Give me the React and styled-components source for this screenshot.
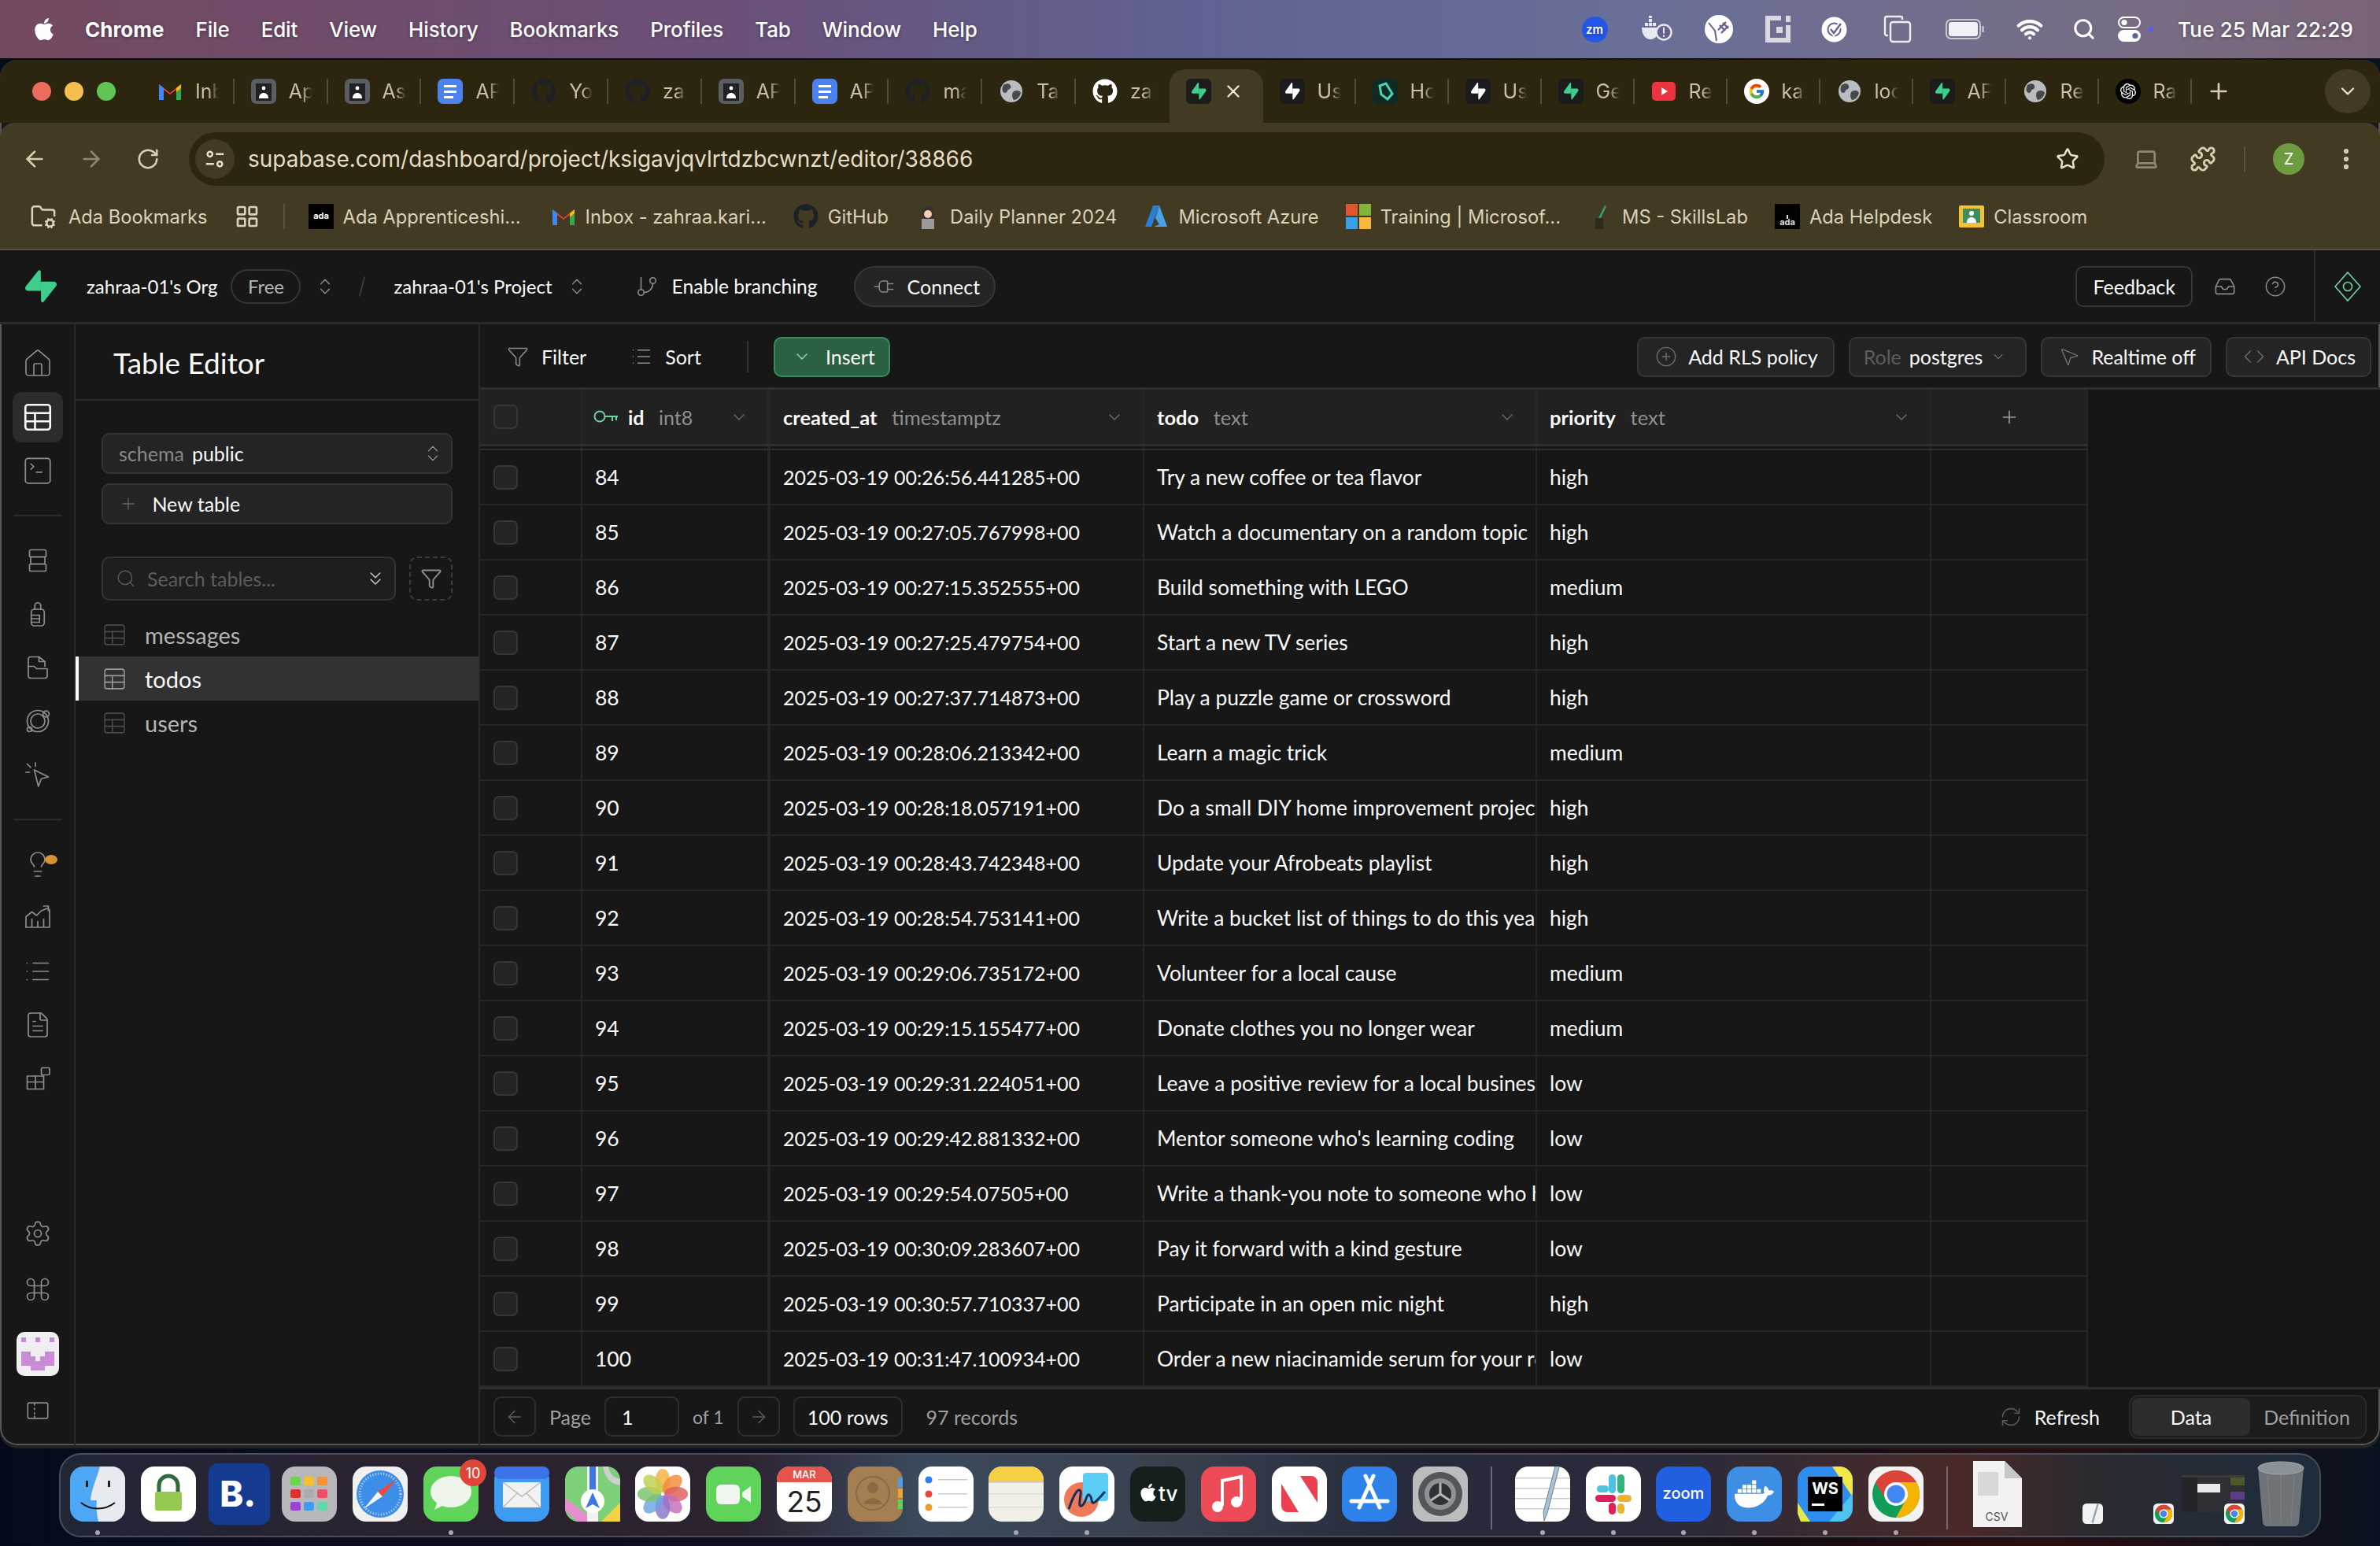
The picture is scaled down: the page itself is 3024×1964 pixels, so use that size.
import { createGlobalStyle, styled } from "styled-components";
import {
  ArrowLeft, ArrowRight, RotateCw, Star, Laptop, Puzzle, EllipsisVertical, Plus, ChevronDown, ChevronsUpDown,
  X, FolderCog, LayoutGrid, GitBranch, Plug, Inbox, CircleHelp, Filter as FilterIcon, List, ChevronsDown, Search,
  CirclePlus, MousePointer2, Code, RefreshCw, Lightbulb, FileText, Settings, Command, SquareTerminal,
  House, Wifi,
} from "lucide-react";
import { FaApple, FaGithub, FaDocker } from "react-icons/fa";
import { FcGoogle } from "react-icons/fc";
import { SiOpenai } from "react-icons/si";

const APP_FONT = `"Lato", "Liberation Sans", sans-serif`;
const SYS_FONT = `"Inter", "Liberation Sans", sans-serif`;

const rows = [
  [84, "2025-03-19 00:26:56.441285+00", "Try a new coffee or tea flavor", "high"],
  [85, "2025-03-19 00:27:05.767998+00", "Watch a documentary on a random topic", "high"],
  [86, "2025-03-19 00:27:15.352555+00", "Build something with LEGO", "medium"],
  [87, "2025-03-19 00:27:25.479754+00", "Start a new TV series", "high"],
  [88, "2025-03-19 00:27:37.714873+00", "Play a puzzle game or crossword", "high"],
  [89, "2025-03-19 00:28:06.213342+00", "Learn a magic trick", "medium"],
  [90, "2025-03-19 00:28:18.057191+00", "Do a small DIY home improvement project", "high"],
  [91, "2025-03-19 00:28:43.742348+00", "Update your Afrobeats playlist", "high"],
  [92, "2025-03-19 00:28:54.753141+00", "Write a bucket list of things to do this year", "high"],
  [93, "2025-03-19 00:29:06.735172+00", "Volunteer for a local cause", "medium"],
  [94, "2025-03-19 00:29:15.155477+00", "Donate clothes you no longer wear", "medium"],
  [95, "2025-03-19 00:29:31.224051+00", "Leave a positive review for a local business", "low"],
  [96, "2025-03-19 00:29:42.881332+00", "Mentor someone who's learning coding", "low"],
  [97, "2025-03-19 00:29:54.07505+00", "Write a thank-you note to someone who helped", "low"],
  [98, "2025-03-19 00:30:09.283607+00", "Pay it forward with a kind gesture", "low"],
  [99, "2025-03-19 00:30:57.710337+00", "Participate in an open mic night", "high"],
  [100, "2025-03-19 00:31:47.100934+00", "Order a new niacinamide serum for your routine", "low"],
];

const COLUMNS = "130px 239px 475px 499px 501px 199px";

/* ---------- small drawings ---------- */

const SupaMark = ({ size = 32, color = "#3ecf8e" }) => (
  <svg width={size} height={size * 1.04} viewBox="0 0 109 113" fill="none">
    <path d="M63.7 110.3c-2.9 3.6-8.7 1.6-8.7-3L54 40.1h45.2c8.2 0 12.8 9.5 7.7 15.9l-43.2 54.3z" fill={color} />
    <path d="M45.3 2.1c2.9-3.6 8.7-1.6 8.7 3l.4 67.2H9.8c-8.2 0-12.8-9.5-7.7-15.9L45.3 2.1z" fill={color} />
  </svg>
);

const Fav = ({ children, bg = "none" }) => (
  <svg width="32" height="32" viewBox="0 0 32 32">
    <rect width="32" height="32" rx="7" fill={bg} />
    {children}
  </svg>
);

const GmailFav = () => (
  <Fav>
    <path d="M2 27V7l14 11L30 7v20h-6V14l-8 6-8-6v13z" fill="#ea4335" />
    <path d="M2 27V7l6 5v15z" fill="#4285f4" />
    <path d="M30 27V7l-6 5v15z" fill="#34a853" />
    <path d="M24 12l6-5v5l-6 5z" fill="#fbbc04" />
  </Fav>
);
const ContactFav = () => (
  <Fav bg="#5a5d62">
    <rect x="6" y="6" width="20" height="22" fill="#1f2124" />
    <circle cx="16" cy="12" r="2.4" fill="#fff" />
    <path d="M10 25c0-5 3-7 6-7s6 2 6 7z" fill="#fff" />
  </Fav>
);
const DocsFav = () => (
  <Fav bg="#4c82ee">
    <rect x="8" y="8" width="16" height="3" fill="#fff" />
    <rect x="8" y="15" width="16" height="3" fill="#fff" />
    <rect x="8" y="22" width="12" height="3" fill="#fff" />
  </Fav>
);
const SupaFav = ({ color = "#3ecf8e" }) => (
  <svg width="32" height="32" viewBox="0 0 32 32">
    <rect width="32" height="32" rx="6" fill="#1c1c1c" />
    <g transform="translate(7 5) scale(.17 .19)">
      <path d="M63.7 110.3c-2.9 3.6-8.7 1.6-8.7-3L54 40.1h45.2c8.2 0 12.8 9.5 7.7 15.9l-43.2 54.3z" fill={color} />
      <path d="M45.3 2.1c2.9-3.6 8.7-1.6 8.7 3l.4 67.2H9.8c-8.2 0-12.8-9.5-7.7-15.9L45.3 2.1z" fill={color} />
    </g>
  </svg>
);
const GlobeFav = () => (
  <Fav>
    <circle cx="16" cy="16" r="14" fill="#b9bcc0" />
    <path d="M6 8c5-3 8-2 9 1s-1 4-3 5-1 4-4 4-5-5-2-10zM19 16c4-2 8-1 9 2-1 5-5 9-9 9-2-3-3-8 0-11z" fill="#45484d" />
  </Fav>
);
const YtFav = () => (
  <Fav>
    <rect x="1" y="4" width="30" height="24" rx="5" fill="#ee3340" />
    <path d="M13 11l8 5-8 5z" fill="#fff" />
  </Fav>
);
const HcFav = () => (
  <Fav bg="#0d2a26">
    <path d="M9 9l8-3 8 13-6 7-8-6z" fill="none" stroke="#4ad6b0" strokeWidth="3" />
  </Fav>
);
const GoogleFav = () => (
  <svg width="32" height="32" viewBox="0 0 32 32">
    <circle cx="16" cy="16" r="16" fill="#fff" />
    <FcGoogle x="5" y="5" size={22} />
  </svg>
);
const GptFav = () => (
  <svg width="32" height="32" viewBox="0 0 32 32">
    <circle cx="16" cy="16" r="16" fill="#000" />
    <SiOpenai x="6" y="6" size={20} color="#fff" />
  </svg>
);

const favicons = {
  gmail: <GmailFav />,
  contact: <ContactFav />,
  docs: <DocsFav />,
  ghDark: <FaGithub size={32} color="#1d2126" />,
  ghWhite: <FaGithub size={32} color="#fff" />,
  globe: <GlobeFav />,
  supaG: <SupaFav />,
  supaW: <SupaFav color="#fff" />,
  hc: <HcFav />,
  yt: <YtFav />,
  google: <GoogleFav />,
  gpt: <GptFav />,
};

const tabs = [
  ["gmail", "Inbox"], ["contact", "Apprentice"], ["contact", "Assign"], ["docs", "APIs"], ["ghDark", "Your"], ["ghDark", "zahraa"],
  ["contact", "APIs"], ["docs", "APIs"], ["ghDark", "main"], ["globe", "Tasks"], ["ghWhite", "zahraa"], ["supaG", "todos", true],
  ["supaW", "Users"], ["hc", "Home"], ["supaW", "Users"], ["supaG", "Getting"], ["yt", "React"], ["google", "kahoot"],
  ["globe", "local"], ["supaG", "APIs"], ["globe", "React"], ["gpt", "Rate"],
];

const AdaFav = () => (
  <svg width="32" height="32" viewBox="0 0 32 32">
    <rect width="32" height="32" fill="#000" />
    <text x="16" y="19" fontSize="11" fontWeight="700" fill="#fff" textAnchor="middle" fontFamily="Inter">ada</text>
  </svg>
);
const PersonFav = () => (
  <Fav>
    <path d="M9 12c0-6 3-10 7-10s7 4 7 10v6H9z" fill="#3a3230" />
    <circle cx="16" cy="13" r="5" fill="#f2cfb4" />
    <rect x="8" y="19" width="16" height="13" fill="#9a9a9a" />
  </Fav>
);
const AzureFav = () => (
  <Fav>
    <path d="M12 2h8L10 29H2z" fill="#2a7fd5" />
    <path d="M20 2l10 27H13l7-3-5-8 5-16z" fill="#4aa3e8" />
  </Fav>
);
const MsFav = () => (
  <Fav>
    <rect x="0" y="0" width="15" height="15" fill="#e3542c" />
    <rect x="17" y="0" width="15" height="15" fill="#7fb539" />
    <rect x="0" y="17" width="15" height="15" fill="#39a0e5" />
    <rect x="17" y="17" width="15" height="15" fill="#f6b93b" />
  </Fav>
);
const SkillsFav = () => (
  <Fav>
    <path d="M14 18l8-16 2 1-8 17z" fill="#3aa074" />
    <rect x="10" y="18" width="10" height="14" fill="#2e2c20" />
  </Fav>
);
const HelpFav = () => (
  <svg width="32" height="32" viewBox="0 0 32 32">
    <rect width="32" height="32" fill="#000" />
    <text x="16" y="27" fontSize="11" fontWeight="700" fill="#ddd" textAnchor="middle" fontFamily="Inter">ada</text>
    <rect x="15" y="14" width="2" height="5" fill="#ddd" />
  </svg>
);
const ClassFav = () => (
  <Fav>
    <rect x="0" y="2" width="32" height="28" rx="2" fill="#f0c13c" />
    <rect x="5" y="6" width="22" height="18" fill="#3e8f5c" />
    <circle cx="16" cy="12" r="3" fill="#fff" />
    <path d="M10 24c0-5 3-7 6-7s6 2 6 7z" fill="#fff" />
  </Fav>
);

const bookmarks = [
  [<AdaFav />, "Ada Apprenticeshi..."],
  [<GmailFav />, "Inbox - zahraa.kari..."],
  [<FaGithub size={32} color="#1d2126" />, "GitHub"],
  [<PersonFav />, "Daily Planner 2024"],
  [<AzureFav />, "Microsoft Azure"],
  [<MsFav />, "Training | Microsof..."],
  [<SkillsFav />, "MS - SkillsLab"],
  [<HelpFav />, "Ada Helpdesk"],
  [<ClassFav />, "Classroom"],
];

const Stroke = ({ children, size = 36, width = 1.15 }) => (
  <svg width={size} height={size} viewBox="0 0 24 24" fill="none" stroke="currentColor" strokeWidth={width} strokeLinecap="round" strokeLinejoin="round">
    {children}
  </svg>
);
const TableIcon = ({ size = 36, width = 1.2 }) => (
  <Stroke size={size} width={width}>
    <rect x="3" y="3" width="18" height="18" rx="2" />
    <path d="M3 9h18M3 15h18M10 9v12" />
  </Stroke>
);
const DbIcon = () => (
  <Stroke>
    <rect x="5" y="3" width="14" height="6" rx="1.2" />
    <rect x="6" y="9" width="12" height="6" />
    <rect x="5" y="15" width="14" height="6" rx="1.2" />
  </Stroke>
);
const AuthIcon = () => (
  <Stroke>
    <path d="M9.5 8V5a2.5 2.5 0 0 1 5 0v3" />
    <rect x="6.5" y="8" width="11" height="14" rx="2.5" />
    <path d="M6.5 13h7v6h-7M6.5 16h7" />
  </Stroke>
);
const StorageIcon = () => (
  <Stroke>
    <path d="M4 11V5a2 2 0 0 1 2-2h7l5 4v4" />
    <path d="M13 3v4h5" />
    <path d="M4 11h5l2 2h9v6a2 2 0 0 1-2 2H6a2 2 0 0 1-2-2z" />
  </Stroke>
);
const OrbitIcon = () => (
  <Stroke>
    <circle cx="12" cy="12" r="9" />
    <circle cx="12" cy="12" r="6" />
    <circle cx="19" cy="6" r="2.6" />
    <circle cx="5" cy="19" r="2" />
  </Stroke>
);
const PointerIcon = () => (
  <Stroke>
    <path d="M9 8l12 6-6 1.5-2.5 6.5z" />
    <path d="M6 6L3 3M5 10H2M10 5V2" />
  </Stroke>
);
const ChartIcon = () => (
  <Stroke>
    <path d="M2 20V11l5-4 4 3 4-4 5-2M17 2h4v4" />
    <path d="M22 5v15H2M7 20v-7M12 20v-5M17 20v-7" />
  </Stroke>
);
const BlocksIcon = () => (
  <Stroke>
    <rect x="15" y="3" width="7" height="6" rx="1" />
    <path d="M3 10h14v11H3zM3 15h14M10 10v11" />
  </Stroke>
);
const CollapseIcon = () => (
  <Stroke size={34}>
    <rect x="3" y="5" width="18" height="14" rx="1.5" />
    <path d="M9 6v1M9 10v1M9 14v1M9 17v1" />
  </Stroke>
);
const TuneIcon = () => (
  <svg width="30" height="30" viewBox="0 0 24 24" fill="none" stroke="#e8e0c8" strokeWidth="2">
    <circle cx="7" cy="7" r="2.5" />
    <path d="M13 7h8M3 17h8" />
    <circle cx="17" cy="17" r="2.5" />
  </svg>
);
const KeyIcon = () => (
  <svg width="32" height="20" viewBox="0 0 32 20" fill="none" stroke="#6fd3a4" strokeWidth="2">
    <circle cx="8" cy="9" r="6.5" />
    <path d="M14.5 9H31M24 9v6M29 9v5" />
  </svg>
);

/* menu bar status icons */
const DockerAlert = () => (
  <svg width="40" height="34" viewBox="0 0 40 34" fill="#e8e8ee">
    <path d="M1 15h22c0 9-5 15-11 15S1 24 1 15z" />
    <path d="M5 9h4v4H5zM10 9h4v4h-4zM15 9h4v4h-4zM10 4h4v4h-4zM10 0h4v3h-4z" />
    <circle cx="29" cy="21" r="9.5" fill="#62628c" stroke="#e8e8ee" strokeWidth="2.4" />
    <path d="M28 14.5h2v8h-2zM28 24.5h2v2.5h-2z" />
  </svg>
);
const WheelIcon = () => (
  <svg width="38" height="38" viewBox="0 0 38 38">
    <circle cx="19" cy="19" r="18" fill="#fff" />
    <path d="M6 11l8 10 2 13" fill="none" stroke="#62628c" strokeWidth="2" />
    <path d="M18 20l10-10M22 24l9-9M20 14l7 7M24 11l7 7" fill="none" stroke="#62628c" strokeWidth="2.4" />
  </svg>
);
const SquareLogo = () => (
  <svg width="34" height="34" viewBox="0 0 34 34" fill="#d9d9e2">
    <path d="M0 0h20v6H6v22h20v-8h6v14H0z" />
    <rect x="14" y="14" width="8" height="8" />
    <rect x="26" y="0" width="6" height="8" />
    <rect x="26" y="12" width="6" height="10" />
  </svg>
);
const CheckBadge = () => (
  <svg width="33" height="33" viewBox="0 0 33 33">
    <circle cx="16.5" cy="16.5" r="16" fill="#fff" />
    <circle cx="16.5" cy="16.5" r="8" fill="none" stroke="#62628c" strokeWidth="2" />
    <path d="M12 16l4 5 9-12" fill="none" stroke="#fff" strokeWidth="6" />
    <path d="M12 16l4 5 9-12" fill="none" stroke="#62628c" strokeWidth="2.4" />
  </svg>
);
const Overlap = () => (
  <svg width="36" height="36" viewBox="0 0 36 36" fill="none" stroke="#eee" strokeWidth="2.4">
    <path d="M6 26H4a2 2 0 0 1-2-2V4a2 2 0 0 1 2-2h18a2 2 0 0 1 2 2v2" />
    <rect x="9" y="9" width="25" height="25" rx="3" />
  </svg>
);
const Battery = () => (
  <svg width="50" height="26" viewBox="0 0 50 26">
    <rect x="1" y="1" width="43" height="24" rx="6" fill="none" stroke="#c9c9d2" strokeWidth="2" />
    <rect x="4" y="4" width="37" height="18" rx="3.5" fill="#f2f2f6" />
    <rect x="46" y="9" width="3" height="8" rx="1" fill="#bbb" />
  </svg>
);
const ControlCentre = () => (
  <svg width="60" height="32" viewBox="0 0 60 32">
    <rect x="16" y="1" width="27" height="13" rx="6.5" fill="none" stroke="#fff" strokeWidth="2" />
    <circle cx="23" cy="7.5" r="3.6" fill="#fff" />
    <rect x="15" y="17" width="29" height="15" rx="7.5" fill="#fff" />
    <circle cx="37" cy="24.5" r="3.6" fill="#62628c" />
    <circle cx="57" cy="16" r="3.6" fill="#5a60e8" />
  </svg>
);

/* ---------- dock tiles ---------- */

const T = ({ children, bg = "#fff", rx = 17 }) => (
  <svg width="70" height="70" viewBox="0 0 70 70" fontFamily="Inter">
    <rect width="70" height="70" rx={rx} fill={bg} />
    {children}
  </svg>
);
const Finder = () => (
  <T bg="#4ea7f5">
    <path d="M38 0h15a17 17 0 0 1 17 17v36a17 17 0 0 1-17 17H36c-2-10-3-17-2-27h-8c1-14 8-28 12-43z" fill="#e7ebef" />
    <rect x="20" y="18" width="3" height="8" fill="#222" />
    <rect x="48" y="18" width="3" height="8" fill="#222" />
    <path d="M14 46c12 10 30 10 43 0" fill="none" stroke="#111" strokeWidth="2" />
  </T>
);
const LockTile = () => (
  <T>
    <path d="M23 34V24a12 12 0 0 1 24 0v10" fill="none" stroke="#2f6b3c" strokeWidth="5" />
    <rect x="18" y="32" width="34" height="24" rx="3" fill="#95c94f" />
  </T>
);
const Booking = () => (
  <T bg="#153b91" rx={12}>
    <text x="13" y="49" fontSize="40" fontWeight="800" fill="#fff">B.</text>
  </T>
);
const Launchpad = () => {
  const colors = ["#6bd64c", "#f4c02f", "#f0953a", "#d9332c", "#a9adb0", "#ee4f68", "#9a44d2", "#3f9cf2", "#63d6ad"];
  return (
    <T bg="#b8b8bc">
      {colors.map((c, i) => (
        <rect key={c} x={11 + (i % 3) * 17} y={13 + Math.floor(i / 3) * 16} width="13" height="11" rx="2.5" fill={c} />
      ))}
    </T>
  );
};
const Safari = () => (
  <T bg="#f0f0f0">
    <circle cx="35" cy="35" r="30" fill="#3d8ee8" />
    <circle cx="35" cy="35" r="26" fill="none" stroke="#cfe2f8" strokeWidth="3" strokeDasharray="1 2.5" />
    <path d="M56 16L32 32l6 6z" fill="#ee4a3c" />
    <path d="M14 54l24-16-6-6z" fill="#f4f4f4" />
  </T>
);
const Messages = () => (
  <T bg="#5fd35a">
    <ellipse cx="35" cy="32" rx="26" ry="20" fill="#eef5ea" />
    <path d="M18 44l-4 11 14-7z" fill="#eef5ea" />
  </T>
);
const Mail = () => (
  <T bg="#3e9bf2">
    <rect width="70" height="16" rx="8" fill="#3b73e8" />
    <rect x="11" y="20" width="48" height="32" rx="2" fill="#f2f2f2" />
    <path d="M11 20l24 18 24-18M11 52l18-18M59 52L41 34" fill="none" stroke="#bbb" strokeWidth="1.5" />
  </T>
);
const Maps = () => (
  <T bg="#7fd07a">
    <path d="M0 40L40 70H16L0 56z" fill="#e48fd0" />
    <path d="M46 70l24-24v24z" fill="#f6d342" />
    <path d="M28 0h14v70H28z" fill="#f2f2f2" />
    <path d="M31 0h8v34h-8z" fill="#3a78e8" />
    <path d="M48 0c2 14 10 22 22 24v-8C60 14 56 8 55 0z" fill="#cfcfcf" />
    <circle cx="35" cy="44" r="15" fill="#fff" />
    <path d="M35 33l9 20-9-5-9 5z" fill="#3a78e8" />
  </T>
);
const Photos = () => {
  const colors = ["#f4b23e", "#f08b3a", "#e05c5c", "#c46cb8", "#8a74cc", "#6ba6e0", "#78c26a", "#c0d050"];
  return (
    <T>
      {colors.map((c, i) => (
        <ellipse key={c} cx="35" cy="18" rx="9.5" ry="15" fill={c} opacity=".82" transform={`rotate(${i * 45} 35 35)`} />
      ))}
    </T>
  );
};
const Facetime = () => (
  <T bg="#5fd35a">
    <rect x="13" y="23" width="30" height="25" rx="6" fill="#f1f5ef" />
    <path d="M46 33l11-8v21l-11-8z" fill="#f1f5ef" />
  </T>
);
const Calendar = () => (
  <T>
    <path d="M0 20V17A17 17 0 0 1 17 0h36a17 17 0 0 1 17 17v3z" fill="#e5534b" />
    <text x="35" y="15" fontSize="13" fontWeight="500" fill="#fff" textAnchor="middle">MAR</text>
    <text x="35" y="58" fontSize="37" fontWeight="400" fill="#222" textAnchor="middle">25</text>
  </T>
);
const Contacts = () => (
  <T bg="#a47f52">
    <rect x="64" y="14" width="6" height="12" fill="#4d9ee8" />
    <rect x="64" y="28" width="6" height="12" fill="#f0a030" />
    <rect x="64" y="42" width="6" height="12" fill="#5fd35a" />
    <circle cx="32" cy="34" r="21" fill="none" stroke="#8a6a42" strokeWidth="2" />
    <circle cx="32" cy="27" r="7" fill="#8a6a42" />
    <path d="M20 48c3-10 21-10 24 0" fill="#8a6a42" />
  </T>
);
const Reminders = () => (
  <T>
    {[["#2f7ff0", 17], ["#e8453c", 35], ["#f09a30", 52]].map(([c, y]) => (
      <g key={c}>
        <circle cx="13" cy={y} r="5" fill={c} stroke="#fff" strokeWidth="1" />
        <rect x="25" y={y - 1} width="37" height="1.5" fill="#ccc" />
      </g>
    ))}
  </T>
);
const Notes = () => (
  <T bg="#f1efe6">
    <path d="M0 19V17A17 17 0 0 1 17 0h36a17 17 0 0 1 17 17v2z" fill="#f8d046" />
    <rect y="19" width="70" height="1.5" fill="#c9c6b8" />
    <rect y="34" width="70" height="1.5" fill="#ddd" />
    <rect y="51" width="70" height="1.5" fill="#ddd" />
  </T>
);
const Freeform = () => (
  <T>
    <circle cx="28" cy="42" r="22" fill="#ee7a5a" />
    <rect x="30" y="8" width="32" height="36" rx="4" fill="#5ccdf5" />
    <path d="M12 54c4-12 10-26 14-24s-4 22 2 20 6-16 10-14 2 12 6 10 10-10 14-14" fill="none" stroke="#14305e" strokeWidth="3" />
  </T>
);
const TvTile = () => (
  <T bg="#15201c">
    <FaApple x="10" y="20" size={26} color="#fff" />
    <text x="36" y="44" fontSize="26" fontWeight="500" fill="#fff">tv</text>
  </T>
);
const Music = () => (
  <T bg="#ee4b58">
    <path d="M27 50V18l24-5v31" fill="none" stroke="#fff" strokeWidth="4" />
    <circle cx="21" cy="51" r="7" fill="#fff" />
    <circle cx="45" cy="45" r="7" fill="#fff" />
  </T>
);
const News = () => (
  <T>
    <path d="M12 22v28a8 8 0 0 0 8 8h14L12 22zM36 12h14a8 8 0 0 1 8 8v26z" fill="#ec4050" />
  </T>
);
const AppStore = () => (
  <T bg="#2f82ea">
    <path d="M40 12L22 52M30 12l18 40M12 44h46" stroke="#fff" strokeWidth="5" strokeLinecap="round" fill="none" />
  </T>
);
const SysSettings = () => (
  <T bg="#b9bdbe">
    <circle cx="35" cy="35" r="28" fill="#54575a" />
    <circle cx="35" cy="35" r="20" fill="#8f9295" />
    <circle cx="35" cy="35" r="14" fill="#2f3133" />
    <path d="M35 35V21M35 35l12 8M35 35l-12 8" stroke="#b5b8ba" strokeWidth="3" />
  </T>
);
const TextEdit = () => (
  <T>
    {[14, 27, 40, 53].map((y) => (
      <rect key={y} x="0" y={y} width="70" height="1.5" fill="#cdcdcd" />
    ))}
    <path d="M52 -4l5 1-16 62-4 10-1-11z" fill="#a9c2d8" stroke="#6d7d8c" strokeWidth="1" />
  </T>
);
const Slack = () => (
  <T>
    <rect x="29" y="10" width="9" height="24" rx="4.5" fill="#4ec3e0" />
    <rect x="14" y="24" width="15" height="9" rx="4.5" fill="#4ec3e0" />
    <rect x="40" y="10" width="9" height="24" rx="4.5" fill="#2eb67d" />
    <rect x="40" y="36" width="18" height="9" rx="4.5" fill="#ecb22e" />
    <rect x="40" y="47" width="9" height="13" rx="4.5" fill="#ecb22e" />
    <rect x="12" y="36" width="26" height="9" rx="4.5" fill="#e01e5a" />
    <rect x="29" y="46" width="9" height="15" rx="4.5" fill="#e01e5a" />
  </T>
);
const ZoomTile = () => (
  <T bg="#1f5fe0">
    <text x="35" y="41" fontSize="20" fontWeight="500" fill="#fff" textAnchor="middle">zoom</text>
  </T>
);
const DockerTile = () => (
  <T bg="#3d8fe6">
    <FaDocker x="10" y="10" size={50} color="#fff" />
  </T>
);
const WsTile = () => (
  <T bg="#2f8df0">
    <path d="M44 0h9a17 17 0 0 1 17 17v22z" fill="#f2e84a" />
    <path d="M0 46l16 24H4L0 60z" fill="#e0e84a" />
    <path d="M70 34v19a17 17 0 0 1-17 17H40z" fill="#4fc3ee" />
    <rect x="13" y="13" width="44" height="44" fill="#000" />
    <text x="35" y="35" fontSize="20" fontWeight="700" fill="#fff" textAnchor="middle">WS</text>
    <rect x="18" y="47" width="16" height="3" fill="#fff" />
  </T>
);
const ChromeLogo = () => (
  <g>
    <circle cx="35" cy="35" r="30" fill="#0f9d58" />
    <path d="M9 20A30 30 0 0 1 61 20L35 20z" fill="#db4437" />
    <path d="M9 20L22 42 35 35 35 20z" fill="#db4437" />
    <path d="M61 20A30 30 0 0 1 35 65L48 42 35 20z" fill="#f4b400" />
    <circle cx="35" cy="35" r="15" fill="#fff" />
    <circle cx="35" cy="35" r="11.5" fill="#4285f4" />
  </g>
);
const ChromeTile = () => (
  <T bg="#f2f2f2">
    <ChromeLogo />
  </T>
);
const CsvFile = () => (
  <svg width="70" height="84" viewBox="0 0 70 84" fontFamily="Inter">
    <path d="M8 0h36l22 22v62H4V0z" fill="#f2f2f2" />
    <path d="M44 0l22 22H44z" fill="#c8c8c8" />
    <rect x="10" y="14" width="26" height="30" fill="#d8d8d8" />
    <text x="34" y="76" fontSize="14" fill="#555" textAnchor="middle">CSV</text>
  </svg>
);
const MiniTile = ({ children }) => (
  <svg width="26" height="26" viewBox="0 0 70 70">
    <rect width="70" height="70" rx="14" fill="#f2f2f2" />
    {children}
  </svg>
);
const Trash = () => (
  <svg width="62" height="84" viewBox="0 0 62 84">
    <path d="M2 8h58l-6 70a6 6 0 0 1-6 5H14a6 6 0 0 1-6-5z" fill="#6f7479" />
    <ellipse cx="31" cy="9" rx="29" ry="8" fill="#8c9196" stroke="#a4a8ac" />
    <path d="M14 18l4 60M31 18v60M48 18l-4 60" stroke="#7f8388" />
  </svg>
);

/* ---------- page ---------- */

const GlobalStyle = createGlobalStyle`
  html, body { margin: 0; padding: 0; background: #0b0d18; }
  * { box-sizing: border-box; }
`;

const Desktop = styled.div`
  width: 3024px;
  height: 1964px;
  overflow: hidden;
  display: flex;
  flex-direction: column;
  background: linear-gradient(90deg, #060b1c 0%, #0e1020 40%, #140c12 75%, #2a0e10 85%, #0a1220 100%);
`;

const MenuBar = styled.header`
  height: 74px;
  flex: none;
  padding: 0 34px 0 40px;
  display: flex;
  align-items: center;
  gap: 40px;
  font: 400 26px ${SYS_FONT};
  color: #fff;
  text-shadow: 0 1px 4px rgba(0, 0, 0, 0.35);
  background: linear-gradient(90deg, #74495f 0%, #6b5078 30%, #5f6292 50%, #686f98 68%, #786c84 90%, #7a6478 100%);
`;

const MenuItem = styled.span`
  font-weight: ${({ $bold }) => ($bold ? 700 : 500)};
  margin-left: ${({ $bold }) => ($bold ? "-4px" : 0)};
  letter-spacing: ${({ $bold }) => ($bold ? 0 : "-0.15px")};
`;

const Status = styled.div`
  margin-left: auto;
  display: flex;
  align-items: center;
  color: #fff;
`;

const StatusSlot = styled.span`
  width: ${({ $w }) => $w}px;
  flex: none;
  display: flex;
  align-items: center;
  justify-content: center;
`;

const ZoomBadge = styled.span`
  width: 33px;
  height: 33px;
  border-radius: 50%;
  background: #2357e8;
  font: 600 15px ${SYS_FONT};
  display: flex;
  align-items: center;
  justify-content: center;
`;

const Clock = styled.span`
  margin-left: 26px;
  font-weight: 500;
  letter-spacing: 0.2px;
`;

const Window = styled.main`
  margin-top: 2px;
  height: 1760px;
  flex: none;
  border-radius: 22px;
  overflow: hidden;
  display: flex;
  flex-direction: column;
  background: #171717;
  box-shadow: inset 0 0 0 2px #57564f, 0 4px 0 #222;
`;

const TabStrip = styled.div`
  height: 80px;
  flex: none;
  padding-left: 41px;
  display: flex;
  align-items: center;
  background: #2c2510;
  position: relative;
`;

const Light = styled.span`
  width: 24px;
  height: 24px;
  border-radius: 50%;
  margin-right: ${({ $last }) => ($last ? "32px" : "17px")};
  background: ${({ $c }) => $c};
`;

const Tab = styled.div`
  width: ${({ $narrow }) => ($narrow ? "118px" : "118.8px")};
  height: ${({ $active }) => ($active ? "68px" : "32px")};
  align-self: ${({ $active }) => ($active ? "flex-end" : "center")};
  padding: ${({ $active }) => ($active ? "0 0 12px 21px" : "0 0 0 21px")};
  flex: none;
  display: flex;
  align-items: center;
  gap: 16px;
  font: 400 25px ${SYS_FONT};
  color: #c9c0a4;
  border-right: 2px solid ${({ $active, $noSep }) => ($active || $noSep ? "transparent" : "#544c34")};
  background: ${({ $active }) => ($active ? "#433a24" : "none")};
  border-radius: ${({ $active }) => ($active ? "20px 20px 0 0" : "0")};
  svg { flex: none; }
`;

const TabLabel = styled.span`
  width: 30px;
  overflow: hidden;
  white-space: nowrap;
  mask-image: linear-gradient(90deg, #000 55%, transparent);
`;

const TabClose = styled.span`
  display: flex;
  color: #efe8d2;
  margin-left: -1px;
`;

const NewTab = styled.span`
  margin-left: 18px;
  display: flex;
  color: #d8cfb2;
`;

const TabMenu = styled.span`
  margin: 0 12px 0 auto;
  width: 58px;
  height: 56px;
  border-radius: 28px;
  background: #433a24;
  color: #e8e0c8;
  display: flex;
  align-items: center;
  justify-content: center;
`;

const Toolbar = styled.div`
  height: 80px;
  flex: none;
  padding: 0 0 0 8px;
  display: flex;
  align-items: flex-start;
  background: #433a24;
  border-radius: 18px 18px 0 0;
`;

const ToolButton = styled.span`
  width: ${({ $w }) => $w || 72}px;
  height: 68px;
  margin-top: 12px;
  flex: none;
  display: flex;
  align-items: center;
  justify-content: center;
  color: ${({ $c }) => $c || "#d8cfb2"};
`;

const UrlBar = styled.div`
  width: 2434px;
  height: 68px;
  margin: 12px 17px 0 16px;
  flex: none;
  border-radius: 34px;
  padding: 0 32px 0 8px;
  background: #2c2510;
  display: flex;
  align-items: center;
  font: 400 28px ${SYS_FONT};
  color: #e4dcc4;
`;

const TuneBadge = styled.span`
  width: 50px;
  height: 50px;
  border-radius: 50%;
  background: #433a24;
  margin-right: 17px;
  display: flex;
  align-items: center;
  justify-content: center;
`;

const UrlStar = styled.span`
  margin-left: auto;
  display: flex;
  color: #e8e0c8;
`;

const ToolSep = styled.span`
  width: 2px;
  height: 32px;
  margin: 30px 20px 0 16px;
  background: #5c5440;
  flex: none;
`;

const Avatar = styled.span`
  width: 40px;
  height: 40px;
  margin: 26px 36px 0 15px;
  border-radius: 50%;
  flex: none;
  background: #6d9b3f;
  color: #fff;
  font: 400 20px ${SYS_FONT};
  display: flex;
  align-items: center;
  justify-content: center;
`;

const BookmarkBar = styled.nav`
  height: 82px;
  flex: none;
  padding: 0 0 2px 38px;
  display: flex;
  align-items: center;
  gap: 34px;
  background: #433a24;
  border-bottom: 2px solid #55503f;
  font: 400 23.7px ${SYS_FONT};
  color: #d9d1b8;
`;

const Bookmark = styled.span`
  display: flex;
  align-items: center;
  gap: ${({ $gap }) => $gap || 12}px;
  margin-right: ${({ $mr }) => $mr || 0}px;
  white-space: nowrap;
  svg { flex: none; }
`;

const BookmarkSep = styled.span`
  width: 2px;
  height: 32px;
  background: #5c5440;
  margin: 0 -4px;
`;

const TopBar = styled.div`
  height: 94px;
  flex: none;
  padding: 0 0 0 32px;
  display: flex;
  align-items: center;
  background: #171717;
  border-bottom: 3px solid #2a2a2a;
  font: 400 25px ${APP_FONT};
  color: #fafafa;
`;

const OrgName = styled.span`
  margin-left: ${({ $ml }) => $ml}px;
  font-size: 24px;
  white-space: nowrap;
`;

const Pill = styled.span`
  height: 44px;
  width: 89px;
  margin-left: 17px;
  border-radius: 22px;
  border: 2px solid #363636;
  font-size: 24px;
  color: #b4b4b4;
  display: flex;
  align-items: center;
  justify-content: center;
`;

const Dim = styled.span`
  display: flex;
  margin-left: ${({ $auto, $ml }) => ($auto ? "auto" : `${$ml || 0}px`)};
  margin-right: ${({ $mr }) => $mr || 0}px;
  color: ${({ $c }) => $c || "#8a8a8a"};
`;

const Slash = styled.span`
  width: 2px;
  height: 26px;
  margin: 0 39px 0 33px;
  background: #3a3a3a;
  transform: rotate(14deg);
`;

const BranchLabel = styled.span`
  font-size: 24.6px;
  white-space: nowrap;
`;

const RoundButton = styled.span`
  height: 52px;
  padding: 0 18px 0 22px;
  margin-left: ${({ $ml }) => $ml || 0}px;
  border-radius: 26px;
  border: 2px solid #363636;
  background: #242424;
  display: flex;
  align-items: center;
  gap: 16px;
  svg { transform: rotate(90deg); color: #8a8a8a; }
`;

const Feedback = styled.span`
  height: 52px;
  margin-left: auto;
  padding: 0 20px;
  border-radius: 10px;
  border: 2px solid #363636;
  display: flex;
  align-items: center;
`;

const TopRight = styled.span`
  width: 84px;
  height: 100%;
  margin-left: 35px;
  flex: none;
  border-left: 2px solid #2a2a2a;
  display: flex;
  align-items: center;
  justify-content: center;
`;

const Body = styled.div`
  flex: 1;
  min-height: 0;
  display: flex;
`;

const Rail = styled.aside`
  width: 96px;
  flex: none;
  padding: 16px 0 0 2px;
  display: flex;
  flex-direction: column;
  align-items: center;
  border-right: 2px solid #2a2a2a;
  color: #8d8d8d;
`;

const RailItem = styled.span`
  width: 64px;
  height: ${({ $h, $active }) => ($active ? 64 : $h || 68)}px;
  margin: ${({ $active }) => ($active ? "2px 0" : "0")};
  flex: none;
  border-radius: 12px;
  display: flex;
  align-items: center;
  justify-content: center;
  position: relative;
  color: ${({ $active }) => ($active ? "#fafafa" : "inherit")};
  background: ${({ $active }) => ($active ? "#2c2c2c" : "none")};
`;

const RailRule = styled.span`
  width: 62px;
  height: 2px;
  margin: 22px 0;
  background: #2a2a2a;
  flex: none;
`;

const RailBottom = styled.div`
  margin-top: auto;
  padding-bottom: 19px;
  display: flex;
  flex-direction: column;
  align-items: center;
`;

const Dot = styled.span`
  position: absolute;
  width: 16px;
  height: 12px;
  top: 22px;
  right: 7px;
  border-radius: 50%;
  background: #d8922e;
`;

const Pixel = styled.span`
  width: 54px;
  height: 56px;
  border-radius: 10px;
  background: #f1eef1;
  overflow: hidden;
  display: flex;
`;

const Panel = styled.aside`
  width: 514px;
  flex: none;
  border-right: 2px solid #2a2a2a;
  display: flex;
  flex-direction: column;
  font: 400 25px ${APP_FONT};
  color: #fafafa;
`;

const PanelTitle = styled.h1`
  height: 97px;
  margin: 0;
  padding: 2px 0 0 48px;
  display: flex;
  align-items: center;
  font: 400 37px ${APP_FONT};
  border-bottom: 2px solid #2a2a2a;
`;

const PanelInner = styled.div`
  padding: 41px 33px 0;
  display: flex;
  flex-direction: column;
`;

const SchemaSelect = styled.div`
  height: ${({ $h }) => $h}px;
  margin-bottom: ${({ $mb }) => $mb}px;
  padding: 0 10px 0 20px;
  border: 2px solid #333;
  border-radius: 10px;
  background: #242424;
  display: flex;
  align-items: center;
  gap: 10px;
  color: #fafafa;
`;

const Muted = styled.span`
  color: ${({ $c }) => $c || "#898989"};
  font-size: ${({ $size }) => $size || 25}px;
`;

const SearchRow = styled.div`
  display: flex;
  gap: 17px;
`;

const SearchBox = styled.div`
  width: 374px;
  height: 56px;
  padding: 0 10px 0 16px;
  border: 2px solid #333;
  border-radius: 10px;
  background: #1e1e1e;
  display: flex;
  align-items: center;
  gap: 14px;
  color: #5c5c5c;
`;

const DashedButton = styled.span`
  width: 55px;
  height: 56px;
  border: 2px dashed #3c3c3c;
  border-radius: 10px;
  display: flex;
  align-items: center;
  justify-content: center;
  color: #8f8f8f;
`;

const TableList = styled.ul`
  list-style: none;
  margin: 15px 0 0;
  padding: 0;
`;

const TableItem = styled.li`
  height: 56px;
  padding-left: ${({ $active }) => ($active ? "29px" : "33px")};
  display: flex;
  align-items: center;
  gap: 22px;
  font-size: 29px;
  color: ${({ $active }) => ($active ? "#fafafa" : "#b4b4b4")};
  background: ${({ $active }) => ($active ? "#323232" : "none")};
  border-left: ${({ $active }) => ($active ? "4px solid #fafafa" : "0")};
  svg { color: ${({ $active }) => ($active ? "#9a9a9a" : "#4a4a4a")}; flex: none; }
`;

const Main = styled.section`
  flex: 1;
  min-width: 0;
  display: flex;
  flex-direction: column;
  font: 400 25px ${APP_FONT};
  color: #fafafa;
`;

const MainBar = styled.div`
  height: 83px;
  flex: none;
  padding: 2px 11px 0 34px;
  display: flex;
  align-items: center;
  border-bottom: 3px solid #2e2e2e;
`;

const BarAction = styled.span`
  display: flex;
  align-items: center;
  gap: 16px;
  margin-right: ${({ $mr }) => $mr}px;
  svg { color: #8d8d8d; }
`;

const BarSep = styled.span`
  width: 2px;
  height: 40px;
  margin-right: 32px;
  background: #333;
`;

const InsertButton = styled.span`
  height: 51px;
  width: 148px;
  padding-left: 22px;
  border-radius: 10px;
  border: 2px solid #3f8a5c;
  background: #2a6140;
  display: flex;
  align-items: center;
  gap: 18px;
  svg { color: #9fd8b4; }
`;

const BarRight = styled.div`
  margin-left: auto;
  display: flex;
  gap: 18px;
`;

const GhostButton = styled.span`
  height: 51px;
  padding: 0 ${({ $pr }) => $pr || 18}px 0 ${({ $pl }) => $pl || 20}px;
  border-radius: 10px;
  border: 2px solid #363636;
  background: #242424;
  display: flex;
  align-items: center;
  gap: ${({ $gap }) => $gap || 14}px;
  white-space: nowrap;
  svg { color: #6e6e6e; }
`;

const Grid = styled.div`
  flex: 1;
  min-height: 0;
  background: #141414;
`;

const Row = styled.div`
  width: 2043px;
  height: ${({ $h }) => $h}px;
  display: grid;
  grid-template-columns: ${COLUMNS};
  background: ${({ $bg }) => $bg};
  border-bottom: ${({ $line }) => $line}px solid ${({ $lineColor }) => $lineColor || "#262626"};
`;

const Cell = styled.div`
  min-width: 0;
  padding-left: ${({ $pl }) => ($pl === undefined ? 16 : $pl)}px;
  padding-right: ${({ $pr }) => $pr || 0}px;
  display: flex;
  align-items: center;
  overflow: hidden;
  white-space: nowrap;
  gap: 12px;
  font-size: ${({ $size }) => $size || 25}px;
  border-right: ${({ $thick }) => ($thick ? 4 : 2)}px solid #262626;
  justify-content: ${({ $center }) => ($center ? "center" : "flex-start")};
`;

const Check = styled.span`
  width: 31px;
  height: 31px;
  flex: none;
  border-radius: 7px;
  background: #242424;
  border: 2px solid #363636;
`;

const ColName = styled.b`
  font-weight: 700;
`;

const ColType = styled.span`
  color: #8f8f8f;
`;

const ColChevron = styled.span`
  margin-left: auto;
  display: flex;
  color: #6e6e6e;
`;

const Footer = styled.div`
  height: 74px;
  flex: none;
  padding: 0 17px 2px;
  display: flex;
  align-items: center;
  gap: 17px;
  border-top: 3px solid #2e2e2e;
`;

const PageBox = styled.span`
  width: ${({ $w }) => $w}px;
  height: 51px;
  padding-left: ${({ $pl }) => $pl || 0}px;
  border: 2px solid #2e2e2e;
  border-radius: 10px;
  flex: none;
  display: flex;
  align-items: center;
  justify-content: ${({ $pl }) => ($pl ? "flex-start" : "center")};
  color: ${({ $c }) => $c || "#fafafa"};
`;

const Refresh = styled.span`
  margin-left: auto;
  margin-right: 20px;
  display: flex;
  align-items: center;
  gap: 16px;
  svg { color: #5c5c5c; }
`;

const Segments = styled.div`
  width: 302px;
  height: 56px;
  padding: 2px;
  border: 2px solid #2a2a2a;
  border-radius: 12px;
  background: #1c1c1c;
  display: flex;
  align-items: center;
`;

const Segment = styled.span`
  height: 48px;
  width: ${({ $active }) => ($active ? "150px" : "auto")};
  flex: ${({ $active }) => ($active ? "none" : "1")};
  border-radius: 8px;
  display: flex;
  align-items: center;
  justify-content: center;
  color: ${({ $active }) => ($active ? "#fafafa" : "#a0a0a0")};
  background: ${({ $active }) => ($active ? "#2c2c2c" : "none")};
`;

const Dock = styled.footer`
  width: 2874px;
  height: 107px;
  margin: 10px 0 0 75px;
  padding: 15px 0 0 12px;
  flex: none;
  border-radius: 28px;
  border: 2px solid #4a4d58;
  display: flex;
  align-items: flex-start;
  gap: 19.8px;
  background: linear-gradient(90deg, #202636 0%, #2a2230 15%, #2c2230 30%, #3a4a5c 38%, #3a4250 48%, #262a3a 60%, #2c2a3a 72%, #4a2a28 84%, #2a2a30 90%, #1e2c3c 100%);
`;

const DockItem = styled.div`
  width: 70px;
  height: 70px;
  flex: none;
  position: relative;
  display: flex;
  justify-content: ${({ $mini }) => ($mini ? "flex-end" : "center")};
  align-items: ${({ $mini }) => ($mini ? "flex-end" : "center")};
  > svg {
    flex: none;
    position: relative;
    transform: ${({ $scale }) => ($scale ? `scale(${$scale})` : "none")};
    margin: ${({ $mini }) => ($mini ? "0 -9px -3px 0" : "0")};
  }
`;

const RunDot = styled.span`
  position: absolute;
  left: 32px;
  bottom: -17px;
  width: 6px;
  height: 6px;
  border-radius: 50%;
  background: #a8a4b0;
`;

const Badge = styled.span`
  position: absolute;
  top: -9px;
  right: -10px;
  width: 34px;
  height: 34px;
  border-radius: 50%;
  background: #e0453a;
  color: #fff;
  font: 400 18px ${SYS_FONT};
  display: flex;
  align-items: center;
  justify-content: center;
`;

const DockRule = styled.span`
  width: 2px;
  height: 80px;
  margin: 0 9px;
  flex: none;
  background: #6a6a70;
`;

const Thumb = styled.span`
  position: absolute;
  top: 11px;
  left: -1px;
  width: 80px;
  height: 47px;
  background:
    linear-gradient(#e8e8ee, #e8e8ee) 20px 8px / 29px 11px no-repeat,
    linear-gradient(#5b3d86, #5b3d86) 62px 18px / 18px 10px no-repeat,
    linear-gradient(#4a5a2a, #4a5a2a) 62px 0 / 18px 10px no-repeat,
    linear-gradient(#24242a, #24242a) 0 0 / 20px 100% no-repeat,
    #2f2f36;
  border-top: 3px solid #3c3c34;
`;

const dockApps = [
  [<Finder />, true], [<LockTile />], [<Booking />, false, 1.13], [<Launchpad />], [<Safari />], [<Messages />, true, 0, "10"], [<Mail />], [<Maps />], [<Photos />],
  [<Facetime />], [<Calendar />], [<Contacts />], [<Reminders />], [<Notes />, true], [<Freeform />, true], [<TvTile />], [<Music />], [<News />], [<AppStore />], [<SysSettings />],
];
const dockOpen = [<TextEdit />, <Slack />, <ZoomTile />, <DockerTile />, <WsTile />, <ChromeTile />];

const railTop = [[<House size={40} strokeWidth={1} />, false], [<TableIcon size={42} width={1.5} />, true], [<SquareTerminal size={42} strokeWidth={1} />, false]];
const railMid = [<DbIcon />, <AuthIcon />, <StorageIcon />, <OrbitIcon />, <PointerIcon />];

export default function App() {
  return (
    <>
      <GlobalStyle />
      <Desktop>
        <MenuBar>
          <FaApple size={32} />
          <MenuItem $bold>Chrome</MenuItem>
          {["File", "Edit", "View", "History", "Bookmarks", "Profiles", "Tab", "Window", "Help"].map((m) => (
            <MenuItem key={m}>{m}</MenuItem>
          ))}
          <Status>
            <StatusSlot $w={74}><ZoomBadge>zm</ZoomBadge></StatusSlot>
            <StatusSlot $w={84}><DockerAlert /></StatusSlot>
            <StatusSlot $w={74}><WheelIcon /></StatusSlot>
            <StatusSlot $w={78}><SquareLogo /></StatusSlot>
            <StatusSlot $w={62}><CheckBadge /></StatusSlot>
            <StatusSlot $w={100}><Overlap /></StatusSlot>
            <StatusSlot $w={72}><Battery /></StatusSlot>
            <StatusSlot $w={92}><Wifi size={34} strokeWidth={3} /></StatusSlot>
            <StatusSlot $w={46}><Search size={30} strokeWidth={2.4} /></StatusSlot>
            <StatusSlot $w={70}><ControlCentre /></StatusSlot>
            <Clock>Tue 25 Mar  22:29</Clock>
          </Status>
        </MenuBar>

        <Window>
          <TabStrip>
            <Light $c="#ec6a5e" />
            <Light $c="#f4bf4f" />
            <Light $c="#61c554" $last />
            {tabs.map(([icon, label, active], i) => (
              <Tab key={i} $active={active} $noSep={tabs[i + 1]?.[2]} $narrow={i > 11}>
                {favicons[icon]}
                {active ? (
                  <TabClose>
                    <X size={26} strokeWidth={2.2} />
                  </TabClose>
                ) : (
                  <TabLabel>{label}</TabLabel>
                )}
              </Tab>
            ))}
            <NewTab>
              <Plus size={32} strokeWidth={2} />
            </NewTab>
            <TabMenu>
              <ChevronDown size={28} strokeWidth={2} />
            </TabMenu>
          </TabStrip>

          <Toolbar>
            <ToolButton><ArrowLeft size={32} strokeWidth={2} /></ToolButton>
            <ToolButton $c="#8f8770"><ArrowRight size={32} strokeWidth={2} /></ToolButton>
            <ToolButton><RotateCw size={30} strokeWidth={2} /></ToolButton>
            <UrlBar>
              <TuneBadge><TuneIcon /></TuneBadge>
              supabase.com/dashboard/project/ksigavjqvlrtdzbcwnzt/editor/38866
              <UrlStar><Star size={30} strokeWidth={2} /></UrlStar>
            </UrlBar>
            <ToolButton $c="#8f8770"><Laptop size={32} strokeWidth={2} /></ToolButton>
            <ToolButton><Puzzle size={34} strokeWidth={2} /></ToolButton>
            <ToolSep />
            <Avatar>Z</Avatar>
            <ToolButton $w={34}><EllipsisVertical size={34} strokeWidth={2.4} /></ToolButton>
          </Toolbar>

          <BookmarkBar>
            <Bookmark $gap={15}><FolderCog size={34} strokeWidth={1.8} />Ada Bookmarks</Bookmark>
            <LayoutGrid size={32} strokeWidth={2} />
            <BookmarkSep />
            {bookmarks.map(([icon, label], i) => (
              <Bookmark key={label} $mr={i === 0 ? 4 : 0}>{icon}{label}</Bookmark>
            ))}
          </BookmarkBar>

          <TopBar>
            <SupaMark size={40} />
            <OrgName $ml={38}>zahraa-01's Org</OrgName>
            <Pill>Free</Pill>
            <Dim $ml={18}><ChevronsUpDown size={26} strokeWidth={1.4} /></Dim>
            <Slash />
            <OrgName $ml={0}>zahraa-01's Project</OrgName>
            <Dim $ml={18}><ChevronsUpDown size={26} strokeWidth={1.4} /></Dim>
            <Dim $ml={61} $mr={17}><GitBranch size={30} strokeWidth={1.3} /></Dim>
            <BranchLabel>Enable branching</BranchLabel>
            <RoundButton $ml={46}><Plug size={28} strokeWidth={1.3} />Connect</RoundButton>
            <Feedback>Feedback</Feedback>
            <Dim $ml={27}><Inbox size={28} strokeWidth={1.4} /></Dim>
            <Dim $ml={36}><CircleHelp size={28} strokeWidth={1.3} /></Dim>
            <TopRight>
              <svg width="40" height="40" viewBox="0 0 40 40" fill="none" stroke="#6fd3a4" strokeWidth="1.6"><path d="M20 2l16 18-16 18L4 20z" /><circle cx="20" cy="20" r="5.5" /></svg>
            </TopRight>
          </TopBar>

          <Body>
            <Rail>
              {railTop.map(([icon, active], i) => (
                <RailItem key={i} $active={active}>{icon}</RailItem>
              ))}
              <RailRule />
              {railMid.map((icon, i) => (
                <RailItem key={i}>{icon}</RailItem>
              ))}
              <RailRule />
              <RailItem>
                <Lightbulb size={36} strokeWidth={1.15} />
                <Dot />
              </RailItem>
              <RailItem><ChartIcon /></RailItem>
              <RailItem><List size={36} strokeWidth={1.15} /></RailItem>
              <RailItem><FileText size={36} strokeWidth={1.15} /></RailItem>
              <RailItem><BlocksIcon /></RailItem>
              <RailBottom>
                <RailItem $h={72}><Settings size={36} strokeWidth={1.15} /></RailItem>
                <RailItem $h={70}><Command size={36} strokeWidth={1.15} /></RailItem>
                <RailItem $h={94}>
                  <Pixel>
                    <svg width="54" height="56" viewBox="0 0 9 9" fill="#c98ad8" shapeRendering="crispEdges">
                      <path d="M1 1h1v1H1zM4 1h1v1H4zM7 1h1v1H7zM1 4h2v1h1v1h1V5h1V4h2v3H6v1H3V7H1z" />
                    </svg>
                  </Pixel>
                </RailItem>
                <RailItem $h={50}><CollapseIcon /></RailItem>
              </RailBottom>
            </Rail>

            <Panel>
              <PanelTitle>Table Editor</PanelTitle>
              <PanelInner>
                <SchemaSelect $h={52} $mb={12}>
                  <Muted>schema</Muted> public
                  <Dim $auto><ChevronsUpDown size={26} strokeWidth={1.3} /></Dim>
                </SchemaSelect>
                <SchemaSelect $h={52} $mb={41}>
                  <Dim $c="#666" $mr={2}><Plus size={24} strokeWidth={1.3} /></Dim>
                  <span>&nbsp;New table</span>
                </SchemaSelect>
                <SearchRow>
                  <SearchBox>
                    <Search size={26} strokeWidth={1.3} />
                    <span>Search tables...</span>
                    <Dim $auto $c="#c8c8c8"><ChevronsDown size={28} strokeWidth={1.3} /></Dim>
                  </SearchBox>
                  <DashedButton><FilterIcon size={28} strokeWidth={1.6} /></DashedButton>
                </SearchRow>
              </PanelInner>
              <TableList>
                {[["messages"], ["todos", true], ["users"]].map(([name, active]) => (
                  <TableItem key={name} $active={active}>
                    <TableIcon size={33} width={1.1} />
                    {name}
                  </TableItem>
                ))}
              </TableList>
            </Panel>

            <Main>
              <MainBar>
                <BarAction $mr={56}><FilterIcon size={28} strokeWidth={1.3} />Filter</BarAction>
                <BarAction $mr={58}><List size={28} strokeWidth={1.3} />Sort</BarAction>
                <BarSep />
                <InsertButton><ChevronDown size={24} strokeWidth={1.4} />Insert</InsertButton>
                <BarRight>
                  <GhostButton $pl={21} $pr={19}><CirclePlus size={28} strokeWidth={1.2} />Add RLS policy</GhostButton>
                  <GhostButton $pl={17} $pr={24} $gap={10}>
                    <Muted $c="#5c5c5c">Role</Muted>
                    <span>postgres</span>
                    <ChevronDown size={20} strokeWidth={1.3} />
                  </GhostButton>
                  <GhostButton><MousePointer2 size={28} strokeWidth={1.2} />Realtime off</GhostButton>
                  <GhostButton><Code size={28} strokeWidth={1.2} />API Docs</GhostButton>
                </BarRight>
              </MainBar>

              <Grid>
                <Row $h={72} $line={3} $lineColor="#2e2e2e" $bg="#212121">
                  <Cell $pl={17}><Check /></Cell>
                  <Cell $pl={14} $pr={24} $thick>
                    <KeyIcon />
                    <ColName>id</ColName>
                    <ColType>&nbsp;int8</ColType>
                    <ColChevron><ChevronDown size={24} strokeWidth={1.3} /></ColChevron>
                  </Cell>
                  <Cell $pr={24} $size={25.5}>
                    <ColName>created_at</ColName>
                    <ColType>&nbsp;timestamptz</ColType>
                    <ColChevron><ChevronDown size={24} strokeWidth={1.3} /></ColChevron>
                  </Cell>
                  <Cell $pr={24} $size={25.5}>
                    <ColName>todo</ColName>
                    <ColType>&nbsp;text</ColType>
                    <ColChevron><ChevronDown size={24} strokeWidth={1.3} /></ColChevron>
                  </Cell>
                  <Cell $pr={24} $size={25.5}>
                    <ColName>priority</ColName>
                    <ColType>&nbsp;text</ColType>
                    <ColChevron><ChevronDown size={24} strokeWidth={1.3} /></ColChevron>
                  </Cell>
                  <Cell $pl={0} $center><Plus size={26} strokeWidth={1.5} color="#9a9a9a" /></Cell>
                </Row>
                <Row $h={5} $line={2} $lineColor="#2e2e2e" $bg="#171717">
                  <Cell /><Cell $thick /><Cell /><Cell /><Cell /><Cell />
                </Row>
                {rows.map(([id, at, todo, priority]) => (
                  <Row key={id} $h={70} $line={2} $bg="#171717">
                    <Cell $pl={17}><Check /></Cell>
                    <Cell $thick $size={26.5}>{id}</Cell>
                    <Cell>{at}</Cell>
                    <Cell $size={26.4}>{todo}</Cell>
                    <Cell $size={26.4}>{priority}</Cell>
                    <Cell />
                  </Row>
                ))}
              </Grid>

              <Footer>
                <PageBox $w={54} $c="#5c5c5c"><ArrowLeft size={26} strokeWidth={1.4} /></PageBox>
                <Muted $c="#a0a0a0">Page</Muted>
                <PageBox $w={95} $pl={20}>1</PageBox>
                <Muted $c="#a0a0a0" $size={23}>of 1</Muted>
                <PageBox $w={54} $c="#5c5c5c"><ArrowRight size={26} strokeWidth={1.4} /></PageBox>
                <PageBox $w={139}>100 rows</PageBox>
                <Muted $c="#a0a0a0">&nbsp;&nbsp;97 records</Muted>
                <Refresh><RefreshCw size={28} strokeWidth={1.2} />Refresh</Refresh>
                <Segments>
                  <Segment $active>Data</Segment>
                  <Segment>Definition</Segment>
                </Segments>
              </Footer>
            </Main>
          </Body>
        </Window>

        <Dock>
          {dockApps.map(([icon, running, scale, badge], i) => (
            <DockItem key={i} $scale={scale}>
              {icon}
              {running && <RunDot />}
              {badge && <Badge>{badge}</Badge>}
            </DockItem>
          ))}
          <DockRule />
          {dockOpen.map((icon, i) => (
            <DockItem key={i}>
              {icon}
              <RunDot />
            </DockItem>
          ))}
          <DockRule />
          <DockItem><CsvFile /></DockItem>
          <DockItem $mini>
            <MiniTile>
              <path d="M50 0l6 2-20 68-5-8z" fill="#8fa8bc" />
            </MiniTile>
          </DockItem>
          <DockItem $mini>
            <MiniTile><ChromeLogo /></MiniTile>
          </DockItem>
          <DockItem $mini>
            <Thumb />
            <MiniTile><ChromeLogo /></MiniTile>
          </DockItem>
          <DockItem><Trash /></DockItem>
        </Dock>
      </Desktop>
    </>
  );
}
